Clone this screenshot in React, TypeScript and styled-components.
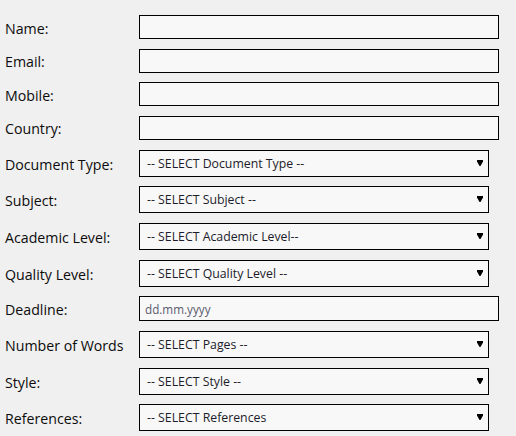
import React from "react";
import styled, { createGlobalStyle } from "styled-components";

const GlobalStyle = createGlobalStyle`
  html, body {
    margin: 0;
    padding: 0;
    background: #f0f0f0;
  }
  body {
    font-family: "Open Sans", "Noto Sans", sans-serif;
    color: #111;
  }
`;

const Form = styled.form`
  display: flex;
  flex-direction: column;
  gap: 9.67px;
  padding: 15px 0 0 5px;
`;

const Row = styled.div`
  display: flex;
  align-items: center;
`;

const Label = styled.label`
  width: 134px;
  flex: none;
  font-size: 14.2px;
  line-height: 19px;
  color: #0c0c0c;
  padding-top: 2px;
`;

const TextInput = styled.input<{ $h: number }>`
  box-sizing: border-box;
  width: 360px;
  height: ${(p) => p.$h}px;
  margin: 0;
  padding: 0 5px;
  border: 1px solid #000;
  border-radius: 0;
  background: #f8f8f8;
  font-family: "Open Sans", "Noto Sans", sans-serif;
  font-size: 11.7px;
  color: #222;
  outline: none;
  &::placeholder {
    color: #5c5c6e;
    opacity: 1;
  }
`;

const SelectWrap = styled.div`
  position: relative;
  width: 350px;
  height: 27px;
`;

const Select = styled.select`
  box-sizing: border-box;
  appearance: none;
  -webkit-appearance: none;
  width: 100%;
  height: 100%;
  margin: 0;
  padding: 0 24px 0 7px;
  border: 1px solid #000;
  border-radius: 0;
  background: #f8f8f8;
  font-family: "Open Sans", "Noto Sans", sans-serif;
  font-size: 12.3px;
  color: #1c1c2a;
  outline: none;
`;

const Arrow = styled.svg`
  position: absolute;
  right: 6px;
  top: 10px;
  width: 6px;
  height: 6px;
  pointer-events: none;
`;

type Field =
  | { kind: "text"; label: string; h: number; placeholder?: string }
  | { kind: "select"; label: string; option: string };

const fields: Field[] = [
  { kind: "text", label: "Name:", h: 24 },
  { kind: "text", label: "Email:", h: 24 },
  { kind: "text", label: "Mobile:", h: 24 },
  { kind: "text", label: "Country:", h: 24 },
  { kind: "select", label: "Document Type:", option: "-- SELECT Document Type --" },
  { kind: "select", label: "Subject:", option: "-- SELECT Subject --" },
  { kind: "select", label: "Academic Level:", option: "-- SELECT Academic Level--" },
  { kind: "select", label: "Quality Level:", option: "-- SELECT Quality Level --" },
  { kind: "text", label: "Deadline:", h: 25, placeholder: "dd.mm.yyyy" },
  { kind: "select", label: "Number of Words", option: "-- SELECT Pages --" },
  { kind: "select", label: "Style:", option: "-- SELECT Style --" },
  { kind: "select", label: "References:", option: "-- SELECT References" },
];

export default function App() {
  return (
    <>
      <GlobalStyle />
      <Form onSubmit={(e) => e.preventDefault()}>
        {fields.map((f, i) => (
          <Row key={i}>
            <Label>{f.label}</Label>
            {f.kind === "text" ? (
              <TextInput $h={f.h} type="text" placeholder={f.placeholder} />
            ) : (
              <SelectWrap>
                <Select defaultValue="">
                  <option value="">{f.option}</option>
                </Select>
                <Arrow viewBox="0 0 6 6">
                  <polygon points="0,0 6,0 6,1.5 3.5,6 2.5,6 0,1.5" fill="#000" />
                </Arrow>
              </SelectWrap>
            )}
          </Row>
        ))}
      </Form>
    </>
  );
}
